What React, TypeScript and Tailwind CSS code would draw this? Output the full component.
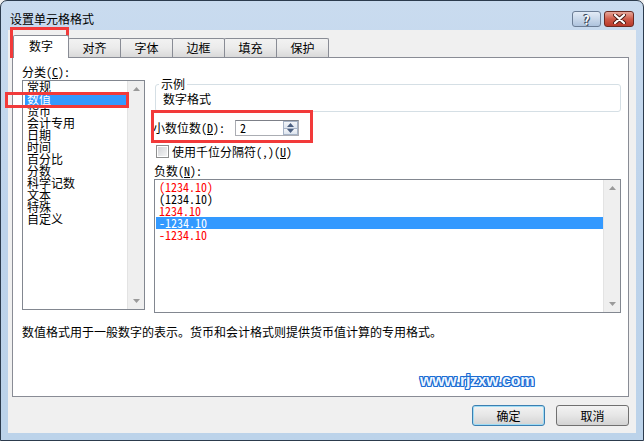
const FONT = "font-['Noto_Sans_Mono_CJK_SC','Noto_Sans_CJK_SC',sans-serif]";

const categories = ['常规', '数值', '货币', '会计专用', '日期', '时间', '百分比', '分数', '科学记数', '文本', '特殊', '自定义'];

const negatives = [
  { text: '(1234.10)', color: 'text-[#ff0000]' },
  { text: '(1234.10)', color: 'text-black' },
  { text: '1234.10', color: 'text-[#ff0000]' },
  { text: '-1234.10', color: 'text-white', selected: true },
  { text: '-1234.10', color: 'text-[#ff0000]' },
];

const tabs = ['对齐', '字体', '边框', '填充', '保护'];

function Arrow({ up, className = '' }: { up?: boolean; className?: string }) {
  return (
    <svg width="7" height="4" viewBox="0 0 7 4" className={className}>
      <path d={up ? 'M0 4 L3.5 0 L7 4 Z' : 'M0 0 L3.5 4 L7 0 Z'} fill="currentColor" />
    </svg>
  );
}

function ScrollBar() {
  return (
    <div className="flex w-[17px] flex-col items-center justify-between border-l border-[#e3e3e3] bg-[#efefef] py-[6px] text-[#9a9a9a]">
      <Arrow up />
      <Arrow />
    </div>
  );
}

function Mnemonic({ children }: { children: string }) {
  return (
    <>
      (<span className="underline">{children}</span>)
    </>
  );
}

function DialogButton({ label, isDefault }: { label: string; isDefault?: boolean }) {
  return (
    <button
      type="button"
      className={`flex h-[21px] w-[73px] items-center justify-center rounded-[3px] border bg-gradient-to-b from-[#f3f3f3] via-[#e6e6e6] to-[#d3d3d3] text-[12px] leading-[12px] ${
        isDefault ? 'border-[#3c7fb1] shadow-[inset_0_0_0_1px_#9fdcf5]' : 'border-[#707070]'
      }`}
    >
      {label}
    </button>
  );
}

export default function App() {
  return (
    <div className={`relative h-[441px] w-[644px] overflow-hidden bg-[#f0f0f0] ${FONT} text-[12px] text-black`}>
      <div className="flex h-full flex-col rounded-t-[7px] border border-[#2c3b4d] bg-gradient-to-b from-[#c9dbef] via-[#bdd3eb] to-[#bcd3ea]">
        {/* title bar */}
        <div className="flex h-[29px] items-start">
          <div className="flex-1 pl-[9px] pt-[11px] leading-[14px]">设置单元格格式</div>
          <div className="mt-[10px] flex h-[16px] w-[29px] items-center justify-center rounded-[3px] border border-[#6b7d95] bg-gradient-to-b from-[#e2ebf6] via-[#c9d8ea] to-[#aec3dd] text-[13px] font-bold leading-none text-white [text-shadow:0_0_1px_#2a3a50,1px_1px_0_#3a4a60,-1px_-1px_0_#3a4a60]">
            ?
          </div>
          <div className="ml-[3px] mr-[9px] mt-[10px] flex h-[16px] w-[30px] items-center justify-center rounded-[3px] border border-[#6b2a22] bg-gradient-to-b from-[#e6a89c] via-[#cf5a49] to-[#b8392b]">
            <svg width="13" height="10" viewBox="0 0 13 10">
              <path d="M2 1 L11 9 M11 1 L2 9" stroke="#4a1a14" strokeWidth="4" strokeLinecap="round" />
              <path d="M2 1 L11 9 M11 1 L2 9" stroke="#ffffff" strokeWidth="2.2" strokeLinecap="round" />
            </svg>
          </div>
        </div>

        {/* client area */}
        <div className="mx-[7px] mb-[7px] flex flex-1 flex-col bg-[#f0f0f0] pl-[4px] pr-[7px] pt-[5px]">
          {/* tabs */}
          <div className="flex h-[22px] items-end pl-px">
            <div className="relative z-10 -mb-px flex h-[23px] w-[56px] items-center justify-center rounded-t-[2px] border-x border-t border-[#898c95] bg-white pb-[2px] leading-[12px]">
              数字
            </div>
            {tabs.map((tab) => (
              <div
                key={tab}
                className="-ml-px flex h-[19px] w-[53px] items-center justify-center rounded-t-[2px] border-x border-t border-[#898c95] bg-gradient-to-b from-[#f2f2f2] via-[#ebebeb] to-[#d9d9d9] leading-[12px]"
              >
                {tab}
              </div>
            ))}
          </div>

          {/* panel */}
          <div className="relative flex h-[340px] flex-col border border-[#898c95] bg-white pl-[9px] pr-[7px] pt-[7px]">
            <div className="flex">
              <div className="w-[123px]">
                <div className="h-[15px] leading-[14px]">
                  分类<Mnemonic>C</Mnemonic>:
                </div>
                <div className="flex h-[230px] border border-[#828790] bg-white">
                  <div className="flex-1 pl-[2px]">
                    {categories.map((c) => (
                      <div
                        key={c}
                        className={`h-[12px] pl-[2px] leading-[12px] ${c === '数值' ? 'bg-[#3399ff] text-white' : ''}`}
                      >
                        {c}
                      </div>
                    ))}
                  </div>
                  <ScrollBar />
                </div>
              </div>

              <div className="ml-[8px] flex-1 pt-[12px]">
                <fieldset className="ml-[2px] h-[35px] rounded-[3px] border border-[#d5dfe5] pl-[7px] pr-[3px]">
                  <legend className="ml-[-4px] px-[2px] leading-[14px]">示例</legend>
                  <div className="pt-[2px] leading-[12px]">数字格式</div>
                </fieldset>

                <div className="mt-[8px] flex h-[16px] items-center">
                  <div className="w-[82px] leading-[12px]">
                    小数位数<Mnemonic>D</Mnemonic>:
                  </div>
                  <div className="flex h-[16px] w-[64px] border border-[#abadb3] border-t-[#7d8088] bg-white">
                    <div className="flex-1 pl-[4px] leading-[14px]">2</div>
                    <div className="flex w-[15px] flex-col">
                      <div className="flex flex-1 items-center justify-center border border-[#a6b3c6] bg-gradient-to-b from-[#f4f6f9] to-[#dde4ee] text-[#4b5f80]">
                        <Arrow up />
                      </div>
                      <div className="flex flex-1 items-center justify-center border border-t-0 border-[#a6b3c6] bg-gradient-to-b from-[#f4f6f9] to-[#dde4ee] text-[#4b5f80]">
                        <Arrow />
                      </div>
                    </div>
                  </div>
                </div>

                <div className="mt-[9px] flex h-[13px] items-center">
                  <div className="ml-[3px] flex h-[13px] w-[13px] items-center justify-center border border-[#8e8f8f] bg-white">
                    <div className="h-[9px] w-[9px] bg-gradient-to-br from-[#d2d4d8] to-[#f4f4f4]" />
                  </div>
                  <div className="ml-[3px] leading-[12px]">
                    使用千位分隔符(,)<Mnemonic>U</Mnemonic>
                  </div>
                </div>

                <div className="mt-[6px] h-[15px] pl-px leading-[14px]">
                  负数<Mnemonic>N</Mnemonic>:
                </div>
                <div className="ml-px flex h-[134px] border border-[#828790] bg-white">
                  <div className="flex-1 pl-px pt-px">
                    {negatives.map((n, i) => (
                      <div
                        key={i}
                        className={`h-[12px] pl-[3px] leading-[12px] ${n.color} ${n.selected ? 'bg-[#3399ff]' : ''}`}
                      >
                        {n.text}
                      </div>
                    ))}
                  </div>
                  <ScrollBar />
                </div>
              </div>
            </div>

            <div className="mt-[12px] leading-[14px]">
              数值格式用于一般数字的表示。货币和会计格式则提供货币值计算的专用格式。
            </div>

            <div className="absolute left-[407px] top-[311px] font-['Liberation_Sans',sans-serif] text-[16px] font-bold tracking-[-0.3px] text-[#eef6ff] [text-shadow:1px_0_0_#1b6cd3,-1px_0_0_#1b6cd3,0_1px_0_#1b6cd3,0_-1px_0_#1b6cd3,1px_1px_0_#1b6cd3,-1px_-1px_0_#1b6cd3,1px_-1px_0_#1b6cd3,-1px_1px_0_#1b6cd3]">
              www.rjzxw.com
            </div>
          </div>

          {/* buttons */}
          <div className="mt-[8px] flex justify-end gap-[11px]">
            <DialogButton label="确定" isDefault />
            <DialogButton label="取消" />
          </div>
        </div>
      </div>

      {/* annotation boxes */}
      <div className="pointer-events-none absolute left-[10px] top-[27px] h-[31px] w-[59px] border-[3px] border-[#f23a3a]" />
      <div className="pointer-events-none absolute left-[5px] top-[92px] h-[16px] w-[124px] border-[3px] border-[#f23a3a]" />
      <div className="pointer-events-none absolute left-[151px] top-[110px] h-[33px] w-[162px] border-[3px] border-[#f23a3a]" />
    </div>
  );
}
